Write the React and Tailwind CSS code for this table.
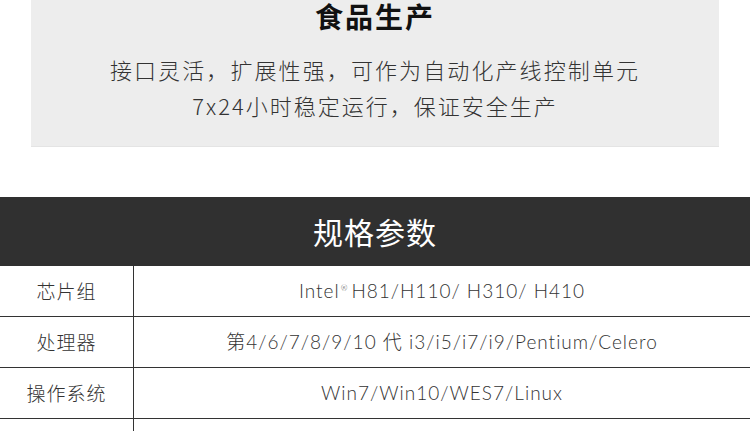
import React from "react";

const specs = [
    { label: "芯片组", value: <>Intel<sup className="text-[8px] relative -top-[3px] ml-[1px] mr-[3px]">®</sup>H81/H110/ H310/ H410</> },
    { label: "处理器", value: "第4/6/7/8/9/10 代 i3/i5/i7/i9/Pentium/Celero" },
    { label: "操作系统", value: "Win7/Win10/WES7/Linux" },
    { label: "", value: "" },
];

const App = () => {
    return (
        <div className="w-[750px] h-[431px] overflow-hidden bg-white text-[#333] font-['Noto_Sans_CJK_SC',sans-serif]">
            {/* Scene card */}
            <div className="mx-[31px] h-[147px] bg-[#ededed] border-b border-[#e4e4e4] flex flex-col items-center">
                <h3 className="text-[28px] leading-[30px] font-bold text-[#111] tracking-[2px] mt-[1px]">食品生产</h3>
                <p className="mt-[20px] text-[22px] leading-[36px] tracking-[2.1px] font-light">接口灵活，扩展性强，可作为自动化产线控制单元</p>
                <p className="text-[22px] leading-[36px] tracking-[2px] font-light">7x24小时稳定运行，保证安全生产</p>
            </div>

            {/* Spec header */}
            <div className="mt-[50px] h-[69px] bg-[#303030] flex items-center justify-center">
                <h2 className="text-[30px] text-white tracking-[1px]">规格参数</h2>
            </div>

            {/* Spec table */}
            <div className="flex flex-col">
                {specs.map((row, i) => (
                    <div key={i} className="flex h-[51px] border-b border-[#333]">
                        <div className="w-[134px] shrink-0 border-r border-[#333] flex items-center justify-center text-[19px] tracking-[1px] font-light">
                            {row.label}
                        </div>
                        <div className="flex-1 flex items-center justify-center text-[19px] font-light font-['Lato','Noto_Sans_CJK_SC',sans-serif] tracking-[1px]">
                            {row.value}
                        </div>
                    </div>
                ))}
            </div>
        </div>
    );
};

export default App;
